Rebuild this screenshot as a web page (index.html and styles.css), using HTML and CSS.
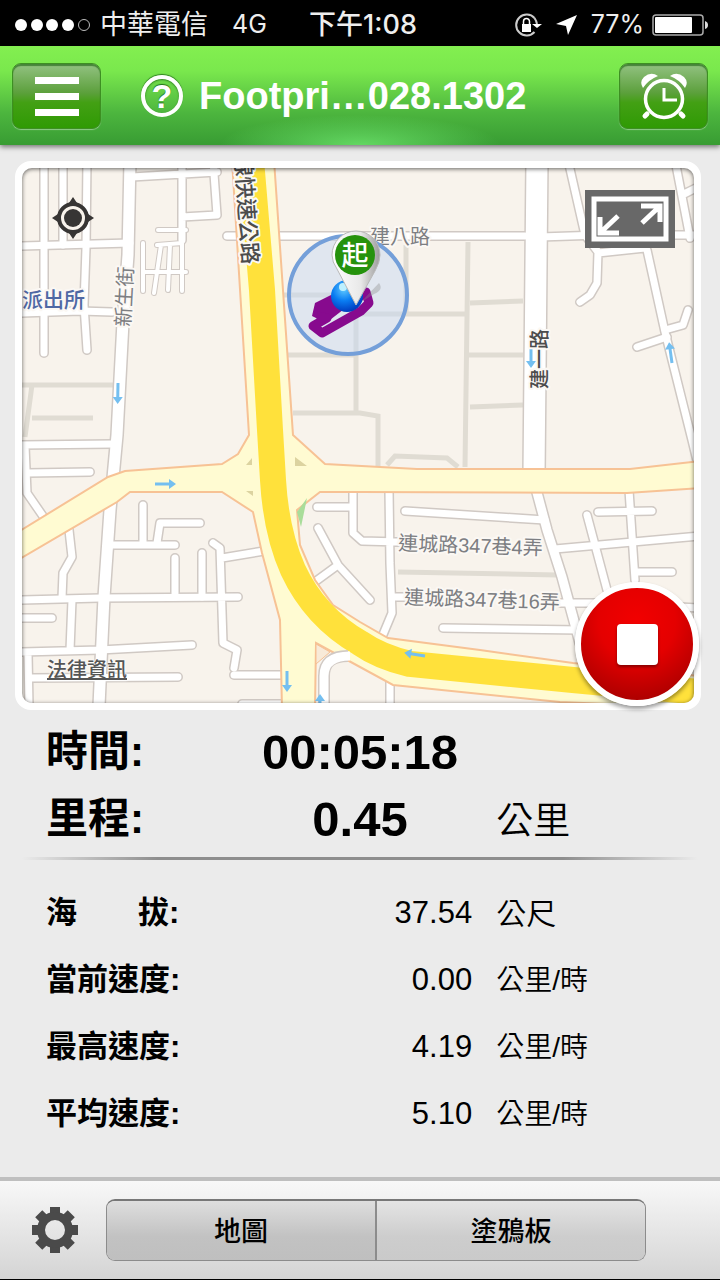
FILE: index.html
```html
<!DOCTYPE html>
<html lang="zh-Hant">
<head>
  <meta charset="UTF-8" />
  <meta name="viewport" content="width=device-width, initial-scale=1.0"/>
  <title>Footprint</title>
  <link rel="stylesheet" href="styles.css">
</head>
<body>
  <div class="status-bar">
    <div class="status-left">
      <svg class="signal" width="78" height="14" viewBox="0 0 78 14">
        <g fill="#fff">
          <circle cx="7" cy="7" r="6"/>
          <circle cx="23" cy="7" r="6"/>
          <circle cx="38" cy="7" r="6"/>
          <circle cx="54" cy="7" r="6"/>
        </g>
        <circle cx="70" cy="7" r="5.5" fill="none" stroke="#bbb"/>
      </svg>
      <span>中華電信</span>
      <span class="network">4G</span>
    </div>
    <span class="clock">下午1:08</span>
    <div class="status-right">
      <svg width="28" height="24" viewBox="0 0 28 24">
        <path d="M20.500 5A10.500 10.500 0 1 0 20.500 19" fill="none" stroke="#ccc" stroke-width="2"/>
        <path d="M20.500 5Q22.500 8 23 11" fill="none" stroke="#ccc" stroke-width="2"/>
        <path d="M18 11H28L23 15Z" fill="#fff"/>
        <path d="M8 11h9v8H8z" fill="#fff"/>
        <path d="M9.500 11V8.500a3 3 0 0 1 6 0V11" fill="none" stroke="#fff" stroke-width="1.500"/>
      </svg>
      <svg class="arrow" width="21" height="20" viewBox="0 0 21 20">
        <path d="M21 0L12 20L10 11L0 9Z" fill="#fff"/>
      </svg>
      <span class="percent">77%</span>
      <svg width="56" height="22" viewBox="0 0 56 22">
        <rect x="1" y="1" width="50" height="20" rx="3" fill="none" stroke="#aaa" stroke-width="1.500"/>
        <rect x="3" y="3" width="37" height="16" rx="1" fill="#fff"/>
        <path d="M53 7q3 1 3 4t-3 4z" fill="#ddd"/>
      </svg>
    </div>
  </div>

  <header class="header">
    <button class="header-button" type="button" aria-label="選單">
      <svg width="44" height="40" viewBox="0 0 44 40" fill="#fff">
        <rect y="1" width="44" height="7"/>
        <rect y="17" width="44" height="7"/>
        <rect y="33" width="44" height="7"/>
      </svg>
    </button>
    <div class="title">
      <button class="help" type="button" aria-label="說明">?</button>
      <h1>Footpri…028.1302</h1>
    </div>
    <button class="header-button" type="button" aria-label="鬧鐘">
      <svg width="48" height="48" viewBox="0 0 48 48">
        <circle cx="24" cy="27" r="18.500" fill="none" stroke="#fff" stroke-width="3.500"/>
        <path d="M24 16V28H37" fill="none" stroke="#fff" stroke-width="3"/>
        <path d="M3 16Q-1 10 4 5Q11 -1 18 4Q8 8 3 16Z" fill="#fff"/>
        <path d="M45 16Q49 10 44 5Q37 -1 30 4Q40 8 45 16Z" fill="#fff"/>
        <path d="M7 42L5 44M41 42L43 44" stroke="#fff" stroke-width="5" stroke-linecap="round"/>
      </svg>
    </button>
  </header>

  <main>
    <section class="map-card">
      <svg class="map" viewBox="22 168 672 535" role="img" aria-label="地圖">
        <defs>
          <g id="lanes" stroke-linejoin="round">
            <path d="M44 160V353M63 160V245M87 160L86 248L84 305L87 350"/>
            <path d="M22 246L130 243M22 313L80 311L112 312"/>
            <path d="M132 177L217 172M182 160V240M213 160L217 215L182 217"/>
            <path d="M227 236H240M270 236H525M540 237L600 235H700"/>
            <path d="M568 160L585 235L598 252L597 283L590 295L580 302M598 253L645 248M647 250L665 332L692 440L698 465"/>
            <path d="M637 347L667 337M665 330L683 325L688 310M675 160L690 238M684 194L700 186"/>
            <path d="M20 445L113 444M28 473L90 472M25 446L27 493L47 522"/>
            <path d="M69 530L72 557L63 573L62 598M143 505V545M157 543L160 523H200M110 545H175M175 558V597M202 553V597"/>
            <path d="M213 543L220 548L223 643L237 650L234 668M222 558L264 551M20 600L100 598L238 597M20 618H52"/>
            <path d="M72 600L70 650M20 652L100 650L192 645M28 653L29 706M30 678L178 677M234 675H284M242 704H284"/>
            <path d="M317 507H353M353 490V533L362 541L400 542M389 490L390 563L392 613L382 637"/>
            <path d="M318 528L338 565L312 584M338 565L370 600M405 511L545 520M555 549L700 536"/>
            <path d="M587 515L607 590M629 490L635 580M598 512L652 511M636 572H672M392 597H414M560 603H600L700 608"/>
            <path d="M443 628L580 630M390 680V706"/>
          </g>
          <g id="alleys">
            <path d="M158 230H186M182 235V291M143 243V291M143 272H186M157 245L182 243M161 245L154 293M170 245L168 290"/>
          </g>
          <path id="avenue" d="M130 160L128 255L123 322L117 435L110 510L104 597L99 706"/>
          <path id="jianyi" d="M537 160L534 475"/>
          <path id="jianyi-south" d="M535 485L547 530L562 577L580 643"/>
          <g id="arrow">
            <path d="M0 0H16" fill="none" stroke="#74bff0" stroke-width="3"/>
            <path d="M14 -5L21 0L14 5Z" fill="#74bff0"/>
          </g>
          <linearGradient id="pin" x1="0" x2="1">
            <stop offset="0" stop-color="#ffffff"/>
            <stop offset="0.6" stop-color="#e8e8e8"/>
            <stop offset="1" stop-color="#9a9a9a"/>
          </linearGradient>
          <radialGradient id="ball" cx="0.4" cy="0.3" r="0.7">
            <stop offset="0" stop-color="#5ec8ff"/>
            <stop offset="0.5" stop-color="#0a7df2"/>
            <stop offset="1" stop-color="#003cc0"/>
          </radialGradient>
        </defs>

        <rect x="22" y="168" width="672" height="535" fill="#f8f3ec"/>

        <!-- footpaths -->
        <path class="footpath" d="M22 385H113M32 385L25 437M32 418H93M283 295H345M287 355H356M293 413L360 413L378 416V467M356 300V413M406 245V314M356 314H468M468 242L465 467M470 303L523 301M468 355H523M470 407L523 405M387 465L395 456L447 458L458 467M398 572L557 575"/>

        <!-- white roads: casing first, then surface -->
        <g class="casing">
          <use href="#alleys" stroke-width="6"/>
          <use href="#lanes" stroke-width="10"/>
          <use href="#avenue" stroke-width="14"/>
          <use href="#jianyi" stroke-width="24"/>
          <use href="#jianyi-south" stroke-width="12"/>
        </g>
        <g class="surface">
          <use href="#alleys" stroke-width="4"/>
          <use href="#lanes" stroke-width="7"/>
          <use href="#avenue" stroke-width="11"/>
          <use href="#jianyi" stroke-width="21"/>
          <use href="#jianyi-south" stroke-width="9"/>
        </g>

        <!-- main road and expressway -->
        <path class="main-road" d="M18 532L108 477L125 471L222 464L238 454L249 435L232 160H274L293 435L325 464L417 469H630L700 461V488L627 493L360 492H320L297 510L300 545L315 580L333 605L360 622L388 638L480 650L573 663L700 676V708L560 702L393 685L360 667L316 643L315 708H282L280 620L262 553L253 512L222 492H130L117 502L18 560Z"/>
        <path class="expressway" d="M251 160L262 290L270 430L273 480Q276 532 293 570Q315 617 360 643Q380 657 410 664L573 680L700 692"/>
        <path d="M295 457V466H307ZM252 458V465H246ZM246 491H253V496Z" fill="#dcd3a0"/>
        <path d="M307 498L297 512L301 527Z" fill="#a9dd9a"/>
        <path d="M316 644V664L330 652Z" fill="#f8ead8" stroke="#f5c092"/>
        <path d="M324 706V676Q324 656 348 656" fill="none" stroke="#d0c9c4" stroke-width="12"/>
        <path d="M324 706V676Q324 656 350 656" fill="none" stroke="#fff" stroke-width="9"/>

        <use href="#arrow" transform="translate(155 484)"/>
        <use href="#arrow" transform="translate(118 383) rotate(91)"/>
        <use href="#arrow" transform="translate(531 347) rotate(90)"/>
        <use href="#arrow" transform="translate(672 363) rotate(-98)"/>
        <use href="#arrow" transform="translate(287 671) rotate(90)"/>
        <use href="#arrow" transform="translate(320 715) rotate(-90)"/>
        <use href="#arrow" transform="translate(425 656) rotate(-171)"/>

        <g class="map-label">
          <text x="370" y="244">建八路</text>
          <text x="398" y="550" transform="rotate(2 398 550)">連城路347巷4弄</text>
          <text x="404" y="604" transform="rotate(2 404 604)">連城路347巷16弄</text>
          <text x="130" y="327" transform="rotate(-87 130 327)">新生街</text>
          <text class="dark" x="547" y="389" transform="rotate(-90 547 389)">建一路</text>
          <text class="dark road-name" x="235" y="155" transform="rotate(86 235 155)">線快速公路</text>
          <text class="station" x="22" y="307">派出所</text>
        </g>

        <!-- position, track and start pin -->
        <circle cx="348" cy="295" r="59" fill="#c4d8f4" fill-opacity="0.45" stroke="#749fd9" stroke-width="4"/>
        <path d="M315 303L331 295L348 306L326 323L312 316Z" fill="#870a8e"/>
        <path d="M317 316L327 318L313 326L322 333L361 311L369 303L366 292L348 306" fill="none" stroke="#870a8e" stroke-width="9" stroke-linejoin="round"/>
        <path d="M360 303L379 283Q384 290 374 294Z" fill="#888" fill-opacity="0.35"/>
        <circle cx="347" cy="296" r="16" fill="url(#ball)"/>
        <circle cx="343" cy="287" r="4" fill="#bdf0ff"/>
        <path d="M356 305L337 269Q332 262 332 255A24 24 0 0 1 380 255Q380 262 375 271Z" fill="url(#pin)" stroke="#b9b9b9"/>
        <circle cx="355" cy="255" r="20" fill="#25920c"/>
        <text class="pin-text" x="355" y="265">起</text>
      </svg>

      <button class="locate" type="button" aria-label="定位">
        <svg width="42" height="42" viewBox="0 0 42 42">
          <circle cx="21" cy="21" r="14" fill="#f8f3ec" stroke="#373534" stroke-width="4"/>
          <circle cx="21" cy="21" r="9" fill="#373534"/>
          <path d="M17 6L21 0L25 6ZM17 36L21 42L25 36ZM6 17L0 21L6 25ZM36 17L42 21L36 25Z" fill="#373534"/>
        </svg>
      </button>

      <button class="expand" type="button" aria-label="全螢幕">
        <svg width="78" height="46" viewBox="0 0 78 46" fill="none" stroke="#fff">
          <rect x="3" y="3" width="72" height="40" stroke-width="5"/>
          <path d="M27 20L10 36M9 21V37H28" stroke-width="5"/>
          <path d="M51 27L68 11M50 10H69V26" stroke-width="5"/>
        </svg>
      </button>

      <a class="legal" href="#legal">法律資訊</a>
      <button class="stop" type="button" aria-label="停止"></button>
    </section>

    <dl class="stats primary">
      <div class="row"><dt>時間:</dt><dd class="value">00:05:18</dd></div>
      <div class="row"><dt>里程:</dt><dd class="value">0.45</dd><dd class="unit">公里</dd></div>
    </dl>
    <hr class="divider">
    <dl class="stats">
      <div class="row"><dt class="spread"><span>海</span><span>拔:</span></dt><dd class="value">37.54</dd><dd class="unit">公尺</dd></div>
      <div class="row"><dt>當前速度:</dt><dd class="value">0.00</dd><dd class="unit speed">公里/時</dd></div>
      <div class="row"><dt>最高速度:</dt><dd class="value">4.19</dd><dd class="unit speed">公里/時</dd></div>
      <div class="row"><dt>平均速度:</dt><dd class="value">5.10</dd><dd class="unit speed">公里/時</dd></div>
    </dl>
  </main>

  <footer class="toolbar">
    <button class="settings" type="button" aria-label="設定">
      <svg width="46" height="46" viewBox="-23 -23 46 46">
        <g fill="#4a4a4a">
          <path id="teeth" d="M-5 -23H5V-14H-5ZM-5 14H5V23H-5ZM-23 -5V5H-14V-5ZM14 -5V5H23V-5Z"/>
          <use href="#teeth" transform="rotate(45)"/>
        </g>
        <circle r="14" fill="none" stroke="#4a4a4a" stroke-width="8"/>
      </svg>
    </button>
    <div class="segments">
      <button class="active" type="button">地圖</button>
      <button type="button">塗鴉板</button>
    </div>
  </footer>
</body>
</html>
```
FILE: styles.css
```css
* {
  box-sizing: border-box;
}

body {
  margin: 0;
  min-height: 100vh;
  display: flex;
  flex-direction: column;
  background: #ebebeb;
  color: #000;
  font-family: "Liberation Sans", "Noto Sans CJK TC", sans-serif;
}

button {
  padding: 0;
  border: none;
  background: none;
  font-family: inherit;
  cursor: pointer;
}

svg {
  display: block;
}

/* status bar */
.status-bar {
  display: grid;
  grid-template-columns: 1fr auto 1fr;
  align-items: center;
  height: 46px;
  padding: 3px 12px 0 14px;
  background: #000;
  color: #eee;
  font-family: Inter, "Noto Sans CJK TC", sans-serif;
  font-size: 27px;
  line-height: 43px;
}

.status-left,
.status-right {
  display: flex;
  align-items: center;
  gap: 8px;
}

.status-right {
  justify-content: flex-end;
}

.network {
  margin-left: 16px;
  font-size: 25px;
}

.percent {
  font-size: 25px;
}

.clock {
  padding-left: 4px;
  font-weight: 500;
}

.arrow {
  margin: 0 6px;
}

/* header */
.header {
  display: flex;
  align-items: center;
  height: 99px;
  padding: 0 12px;
  background:
    radial-gradient(ellipse 140px 30px at 50% 100%, rgba(110, 230, 110, 0.8), transparent),
    linear-gradient(#83ef50, #7ae84d 25%, #4cb53e 68%, #389c33);
  box-shadow: 0 2px 5px rgba(0, 0, 0, 0.5);
}

.header-button {
  display: flex;
  align-items: center;
  justify-content: center;
  width: 89px;
  height: 66px;
  border: 1px solid #3d8f22;
  border-radius: 9px;
  background: linear-gradient(#93c282, #5ca03c 45%, #43a014 60%, #2f9a04);
  box-shadow: inset 0 2px 1px rgba(20, 90, 10, 0.6), 0 1px 1px rgba(255, 255, 255, 0.4);
}

.title {
  flex: 1;
  display: flex;
  align-items: center;
  gap: 16px;
  padding-left: 40px;
}

.title h1 {
  margin: 0;
  color: #fff;
  font-size: 38px;
  line-height: 44px;
  white-space: nowrap;
}

.help {
  width: 42px;
  height: 42px;
  border: 4px solid #fff;
  border-radius: 50%;
  color: #fff;
  font-size: 34px;
  font-weight: bold;
  line-height: 34px;
  text-shadow: 0 -1px 1px #1f6d18;
  box-shadow: 0 -1px 1px #2f7d22, inset 0 1px 2px #2f7d22;
}

/* map */
.map-card {
  position: relative;
  margin: 16px 19px 0 15px;
  border: 7px solid #fff;
  border-radius: 16px;
  background: #fff;
}

.map {
  width: 100%;
  height: auto;
  border-radius: 10px;
}

.map-card::after {
  content: "";
  position: absolute;
  inset: 0;
  border-radius: 10px;
  box-shadow: inset 0 1px 4px rgba(0, 0, 0, 0.6);
  pointer-events: none;
}

.footpath {
  fill: none;
  stroke: #e0dcd3;
  stroke-width: 5;
}

.casing,
.surface {
  fill: none;
  stroke-linecap: round;
}

.casing {
  stroke: #d0c9c4;
}

.surface {
  stroke: #fff;
}

.main-road {
  fill: #fffbd2;
  stroke: #f7c295;
  stroke-width: 2;
}

.expressway {
  fill: none;
  stroke: #ffe13b;
  stroke-width: 26;
}

.map-label {
  font-family: "Liberation Sans", "Noto Sans CJK TC", sans-serif;
  font-size: 20px;
  fill: #7d7e82;
  stroke: #fbf8f4;
  stroke-width: 4;
  stroke-linejoin: round;
  paint-order: stroke;
}

.map-label .dark {
  fill: #4c4c4c;
  font-weight: 500;
}

.map-label .road-name {
  font-size: 22px;
}

.map-label .station {
  font-size: 21px;
  font-weight: 500;
  fill: #4f68a4;
}

.pin-text {
  fill: #fff;
  font-size: 27px;
  font-weight: 500;
  text-anchor: middle;
}

.locate {
  position: absolute;
  top: 29px;
  left: 30px;
}

.expand {
  position: absolute;
  top: 22px;
  right: 19px;
  padding: 6px;
  background: #686868;
}

.legal {
  position: absolute;
  left: 25px;
  bottom: 20px;
  color: #555;
  font-size: 20px;
  font-weight: 500;
  line-height: 26px;
  text-shadow: 0 0 2px #fff, 0 0 3px #fff;
}

.stop {
  position: absolute;
  right: -5px;
  bottom: -3px;
  z-index: 1;
  display: flex;
  align-items: center;
  justify-content: center;
  width: 124px;
  height: 124px;
  border: 6px solid #fff;
  border-radius: 50%;
  background: radial-gradient(circle at 50% 30%, #f20000, #e40000 40%, #960000 100%);
  box-shadow: 0 3px 4px rgba(0, 0, 0, 0.4);
}

.stop::before {
  content: "";
  width: 41px;
  height: 41px;
  border-radius: 4px;
  background: #fff;
  box-shadow: 0 2px 3px rgba(80, 0, 0, 0.6);
}

/* statistics */
.stats {
  margin: 0;
  padding: 19px 46px;
}

.stats.primary {
  padding: 8px 46px 5px;
}

.row {
  display: grid;
  grid-template-columns: 9fr 10fr 9fr;
  align-items: center;
  height: 67px;
  font-size: 31px;
  line-height: 40px;
}

.row dt {
  font-weight: bold;
  white-space: nowrap;
}

.row dd {
  margin: 0;
}

.value {
  text-align: right;
}

.row .unit {
  padding: 2px 0 0 24px;
  font-size: 30px;
  font-weight: 350;
}

.row .speed {
  font-size: 28px;
}

.spread {
  display: flex;
  gap: 61px;
}

.primary dt {
  font-size: 42px;
}

.primary .value {
  font-size: 49px;
  font-weight: bold;
  text-align: center;
}

.primary .unit {
  padding-top: 6px;
  font-size: 37px;
}

.divider {
  height: 3px;
  margin: 0 22px;
  border: none;
  background: linear-gradient(90deg, transparent, #8e8e8e 20%, #8e8e8e 80%, transparent);
}

/* toolbar */
.toolbar {
  display: flex;
  align-items: center;
  gap: 28px;
  height: 103px;
  margin-top: auto;
  padding: 0 74px 0 32px;
  border-top: 4px solid #bfbfbf;
  border-bottom: 1px solid #000;
  background: linear-gradient(#f8f8f8, #d4d4d4);
}

.segments {
  flex: 1;
  display: flex;
  height: 62px;
  border: 1px solid #8c8c8c;
  border-top: 2px solid #777;
  border-radius: 9px;
  overflow: hidden;
}

.segments button {
  flex: 1;
  padding-bottom: 3px;
  background: linear-gradient(#e4e4e4, #cdcdcd 60%, #cacaca);
  color: #000;
  font-size: 27px;
  font-weight: 500;
}

.segments .active {
  border-right: 2px solid #8c8c8c;
  background: linear-gradient(#dedede, #c2c2c2 60%, #bfbfbf);
}
```
